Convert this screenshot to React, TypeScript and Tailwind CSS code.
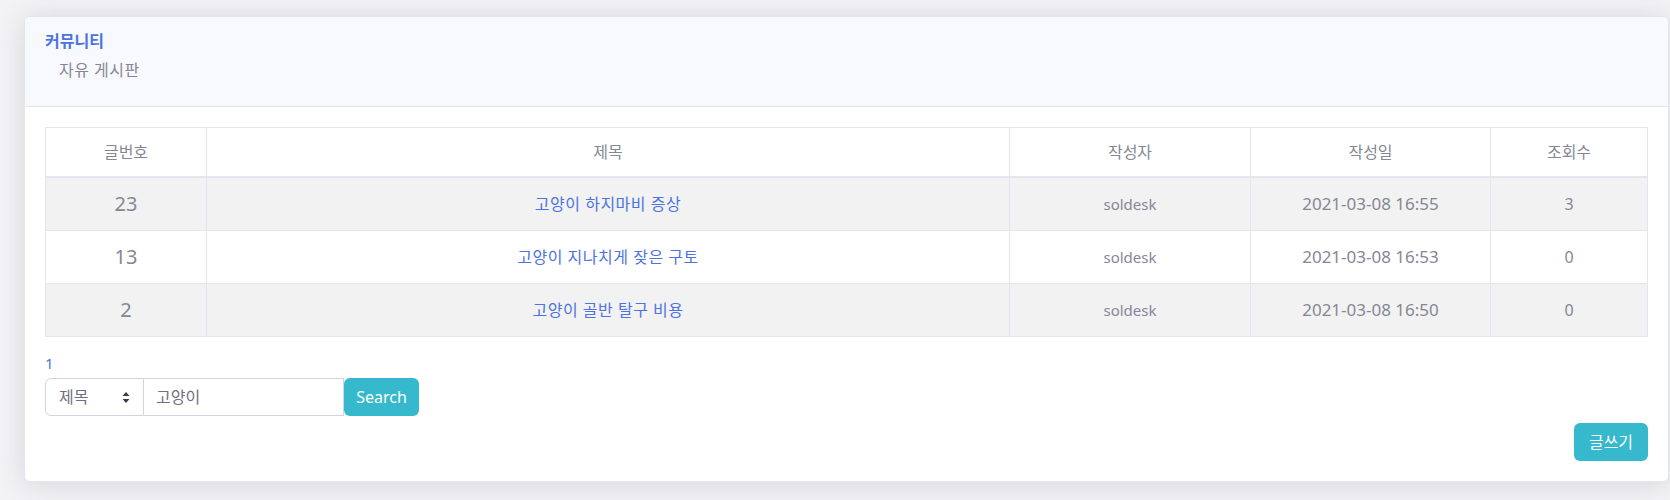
const posts = [
  { no: 23, title: '고양이 하지마비 증상', writer: 'soldesk', date: '2021-03-08 16:55', views: 3 },
  { no: 13, title: '고양이 지나치게 잦은 구토', writer: 'soldesk', date: '2021-03-08 16:53', views: 0 },
  { no: 2, title: '고양이 골반 탈구 비용', writer: 'soldesk', date: '2021-03-08 16:50', views: 0 },
];

const font = { fontFamily: '"Noto Sans", "Noto Sans CJK KR", sans-serif' };

function SelectCaret() {
  return (
    <svg width="8" height="11" viewBox="0 0 8 11" className="text-[#3a3b45]">
      <path d="M4 0 L7.5 4 H0.5 Z" fill="currentColor" />
      <path d="M4 11 L7.5 7 H0.5 Z" fill="currentColor" />
    </svg>
  );
}

export default function App() {
  const cell = 'border border-[#e3e6f0] py-3 leading-[28px]';
  const head = 'border border-[#e3e6f0] py-3 text-[16px] leading-6 font-normal';

  return (
    <div className="min-h-[500px] bg-[#f3f3f6] pt-4 pl-6 pr-px text-[#858796]" style={font}>
      <div className="overflow-hidden rounded-[6px] border border-[#e3e6f0] bg-white shadow-[0_0.15rem_1.75rem_0_rgba(58,59,69,0.15)]">
        <div className="border-b border-[#e3e6f0] bg-[#f8f9fc] px-5 pt-3 pb-6">
          <h6 className="text-[16px] leading-6 font-bold text-[#4e73df]">커뮤니티</h6>
          <div className="mt-[5px] pl-[14px] text-[16px] leading-6 tracking-[0.5px]">자유 게시판</div>
        </div>

        <div className="p-5">
          <table className="w-full border-collapse border border-[#e3e6f0] text-center">
            <thead>
              <tr className="border-b-2 border-[#e3e6f0]">
                <th className={`w-[161px] ${head}`}>글번호</th>
                <th className={`w-[803px] ${head}`}>제목</th>
                <th className={`w-[241px] ${head}`}>작성자</th>
                <th className={`w-[240px] ${head}`}>작성일</th>
                <th className={head}>조회수</th>
              </tr>
            </thead>
            <tbody>
              {posts.map((p, i) => (
                <tr key={p.no} className={i % 2 === 0 ? 'bg-[#f2f2f2]' : 'bg-white'}>
                  <td className={`${cell} text-[20px]`}>{p.no}</td>
                  <td className={`${cell} text-[16px] tracking-[0.5px] text-[#4e73df]`}>
                    <a href="#">{p.title}</a>
                  </td>
                  <td className={`${cell} text-[15px]`}>{p.writer}</td>
                  <td className={`${cell} text-[17px]`}>{p.date}</td>
                  <td className={`${cell} text-[16px]`}>{p.views}</td>
                </tr>
              ))}
            </tbody>
          </table>

          <div className="mt-4 text-[15px] leading-[21px] text-[#4e73df]">
            <a href="#">1</a>
          </div>

          <form className="mt-1 flex h-[38px]">
            <div className="flex w-[99px] items-center justify-between rounded-l-[6px] border border-[#d1d3e2] bg-white pr-[13px] pl-[13px] text-[16px] text-[#6e707e]">
              <span>제목</span>
              <SelectCaret />
            </div>
            <div className="flex w-[200px] items-center border border-l-0 border-[#d1d3e2] bg-white px-3 text-[16px] text-[#6e707e]">
              고양이
            </div>
            <button type="button" className="w-[75px] rounded-[6px] bg-[#36b9cc] text-[16px] text-white">
              Search
            </button>
          </form>

          <div className="mt-[7px] flex justify-end">
            <button type="button" className="h-[38px] w-[74px] rounded-[6px] bg-[#36b9cc] text-[16px] text-white">
              글쓰기
            </button>
          </div>
        </div>
      </div>
    </div>
  );
}
